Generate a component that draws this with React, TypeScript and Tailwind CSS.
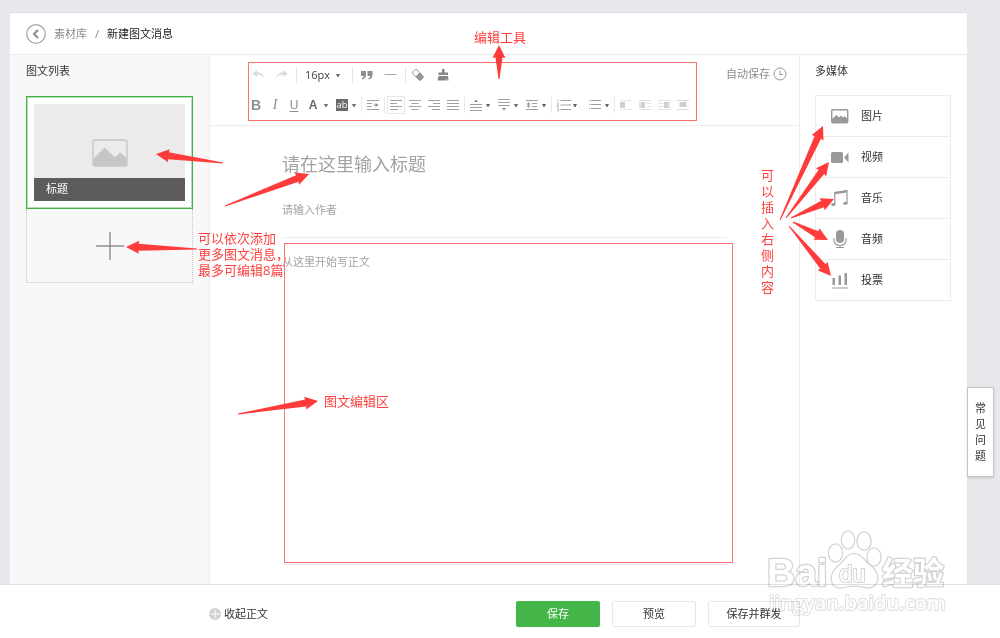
import { useState, type ReactNode } from "react";

type Point = [number, number];

const ARROWS: { from: Point; to: Point }[] = [
  { from: [223, 163], to: [156, 154] },
  { from: [225, 206], to: [309, 174] },
  { from: [197, 249], to: [126, 247] },
  { from: [499, 79], to: [499, 45] },
  { from: [238, 414], to: [318, 401] },
  { from: [780, 220], to: [823, 126] },
  { from: [786, 218], to: [829, 162] },
  { from: [791, 218], to: [834, 199] },
  { from: [793, 222], to: [828, 240] },
  { from: [789, 226], to: [831, 276] },
];

export default function App() {
  return (
    <div className="relative flex min-h-screen flex-col bg-[#e7e8eb] font-['Open_Sans','Noto_Sans_CJK_SC',sans-serif] text-[11px] leading-4 text-[#333]">
      <main className="flex flex-1 pt-3 pr-[33px] pl-[10px]">
        <div className="flex flex-1 flex-col border-t border-[#dedfe2] bg-white">
          <Header />
          <div className="flex flex-1">
            <ArticleList />
            <Editor />
            <MediaPanel />
          </div>
        </div>
      </main>
      <Footer />
      <button
        type="button"
        className="absolute top-[387px] right-[6px] flex h-[90px] w-[27px] items-center justify-center border border-[#c4c4c4] bg-white shadow-sm"
      >
        <span className="w-3 break-all">常见问题</span>
      </button>
      <Watermark />
      <Annotations />
    </div>
  );
}

function Header() {
  return (
    <header className="flex h-[42px] items-center border-b border-[#ececec] pl-4">
      <a href="#back" aria-label="返回">
        <svg className="size-5" viewBox="0 0 20 20" fill="none">
          <circle cx="10" cy="10" r="9.3" stroke="#a8a8a8" strokeWidth="1.3" />
          <path d="M12 6l-4 4 4 4" stroke="#8c8c8c" strokeWidth="2" />
        </svg>
      </a>
      <nav className="ml-2 flex gap-2">
        <a href="#library" className="text-[#8d8d8d]">素材库</a>
        <span className="text-[#8d8d8d]">/</span>
        <span className="text-[#222]">新建图文消息</span>
      </nav>
    </header>
  );
}

function ArticleList() {
  return (
    <aside className="w-[200px] border-r border-[#ececec] bg-[#f8f8f8] px-4 pt-2">
      <h2>图文列表</h2>
      <div className="mt-[17px] w-[167px] border border-[#3fb344] bg-white p-[7px] shadow-[inset_0_0_0_1px_#b5e0b6]">
        <div className="flex h-[97px] flex-col bg-[#ebebeb]">
          <div className="flex flex-1 items-end justify-center pb-[11px]">
            <svg className="h-7 w-9" viewBox="0 0 36 28">
              <rect x="1" y="1" width="34" height="26" rx="2" fill="none" stroke="#c6c6c6" strokeWidth="1.4" />
              <path d="M1 20L12.500 8.500L23 18.500L28 13.500L35 19V27H1z" fill="#c6c6c6" />
            </svg>
          </div>
          <p className="bg-[#5c5c5c] px-3 pt-[3px] pb-1 text-white">标题</p>
        </div>
      </div>
      <button
        type="button"
        aria-label="添加图文"
        className="flex h-[74px] w-[167px] items-center justify-center border border-t-0 border-dotted border-[#c4c4c4]"
      >
        <svg className="size-7" viewBox="0 0 28 28" stroke="#8e8e8e" strokeWidth="1.4">
          <path d="M0 14h28M14 0v28" />
        </svg>
      </button>
    </aside>
  );
}

function Editor() {
  const [title, setTitle] = useState("");
  const [author, setAuthor] = useState("");
  const [body, setBody] = useState("");

  return (
    <section className="flex flex-1 flex-col">
      <div className="flex items-start justify-between border-b border-[#ececec] pt-[7px] pr-[13px] pb-1 pl-[38px]">
        <Toolbar />
        <span className="mt-1 flex items-center gap-1 text-[#8d8d8d]">
          自动保存
          <svg className="size-3 overflow-visible" viewBox="0 0 12 12" fill="none" stroke="#999">
            <circle cx="6" cy="6" r="6" />
            <path d="M6 2.500V6.500H9" />
          </svg>
        </span>
      </div>
      <div className="flex flex-1 flex-col px-[72px] pt-6 pb-[19px]">
        <input
          aria-label="标题"
          placeholder="请在这里输入标题"
          value={title}
          onChange={(e) => setTitle(e.target.value)}
          className="h-7 text-[18px] outline-none placeholder:text-[#a3a3a3]"
        />
        <input
          aria-label="作者"
          placeholder="请输入作者"
          value={author}
          onChange={(e) => setAuthor(e.target.value)}
          className="mt-6 h-4 outline-none placeholder:text-[#a3a3a3]"
        />
        <textarea
          aria-label="正文"
          placeholder="从这里开始写正文"
          value={body}
          onChange={(e) => setBody(e.target.value)}
          className="mt-[19px] flex-1 resize-none border-y border-[#ececec] pt-4 outline-none placeholder:text-[#a3a3a3]"
        />
      </div>
    </section>
  );
}

function Toolbar() {
  return (
    <div className="flex h-[59px] w-[449px] flex-col gap-0.5 border border-[#ff7070] text-[#8f8f8f]">
      <div className="flex h-6 items-center pl-[3px]">
        <div className="flex gap-3">
          <Tool label="撤销">
            <path d="M5 1L0 4.500L5 8V5.800C8.500 5.500 10.500 6.500 12 9.500C11.800 6 9 3.500 5 3.300z" fill="#dcdcdc" />
          </Tool>
          <Tool label="重做">
            <path d="M7 1L12 4.500L7 8V5.800C3.500 5.500 1.500 6.500 0 9.500C0.200 6 3 3.500 7 3.300z" fill="#dcdcdc" />
          </Tool>
        </div>
        <Divider wide />
        <div className="relative">
          <select
            aria-label="字号"
            className="w-[39px] appearance-none text-[11px] text-[#444] outline-none"
            defaultValue="16px"
          >
            <option>14px</option>
            <option>16px</option>
            <option>18px</option>
          </select>
          <span className="pointer-events-none absolute inset-y-0 right-1 flex items-center">
            <Caret />
          </span>
        </div>
        <Divider wide />
        <div className="flex gap-3">
          <Tool label="引用">
            <path
              d="M0 2h5v4c0 2.500-1.500 4-4 4.500V9c1.200-.4 1.800-1 1.800-2H0zM6.500 2h5v4c0 2.500-1.500 4-4 4.500V9c1.200-.4 1.800-1 1.800-2H6.500z"
              fill="#8f8f8f"
            />
          </Tool>
          <Tool label="分隔线">
            <path d="M-.5 5.500h12" stroke="#a5a5a5" />
          </Tool>
        </div>
        <Divider wide />
        <div className="flex gap-3">
          <Tool label="清除格式">
            <path d="M-1 2.800L1 .8Q2 0 3 1L9 7Q9.600 8 9 9L7 11Q6 11.600 5 11L-1 5Q-1.800 4 -1 2.800z" stroke="#999" fill="none" />
            <path d="M5.500 3.500L9 7Q9.600 8 9 9L7 11Q6 11.600 5 11L1.700 7.500z" fill="#999" />
          </Tool>
          <Tool label="格式刷">
            <path d="M4 0h2.500v3.500h3.500v2.500H0.500V3.500H4zM0.500 7h9.500L10.500 11.500H8.500V9L7.500 11.500H-.5z" fill="#858585" />
          </Tool>
        </div>
      </div>
      <div className="flex h-[31px] items-center pl-px">
        <div className="flex items-center gap-[7px] font-['Liberation_Sans',sans-serif]">
          <button type="button" aria-label="加粗" className="w-3 text-[14px] font-bold">B</button>
          <button type="button" aria-label="斜体" className="w-3 font-['Liberation_Serif',serif] text-[14px] italic">I</button>
          <button type="button" aria-label="下划线" className="w-3 text-[12px] underline underline-offset-2">U</button>
          <button type="button" aria-label="字体颜色" className="w-3 text-[12px] font-bold text-[#666]">A</button>
        </div>
        <span className="w-[5px]" />
        <Caret />
        <span className="w-2" />
        <button type="button" aria-label="背景色" className="h-3 w-3 bg-[#6b6b6b] text-[9px] leading-[11px] text-white">ab</button>
        <span className="w-1" />
        <Caret />
        <Divider />
        <Tool label="首行缩进">
          <path d="M0 1.500h12M0 4.500h5M0 7.500h5M0 10.500h12M6.500 6h3" stroke="#a0a0a0" />
          <path d="M8.500 4L11.500 6L8.500 8z" fill="#888" />
        </Tool>
        <Divider />
        <div className="flex gap-[7px]">
          <Tool label="左对齐" active>
            <path d="M0 1.500h12M0 4.500h7M0 7.500h12M0 10.500h8" stroke="#a0a0a0" />
          </Tool>
          <Tool label="居中">
            <path d="M0 1.500h12M2.500 4.500h7M0 7.500h12M2.500 10.500h7" stroke="#a0a0a0" />
          </Tool>
          <Tool label="右对齐">
            <path d="M0 1.500h12M5 4.500h7M0 7.500h12M4 10.500h8" stroke="#a0a0a0" />
          </Tool>
          <Tool label="两端对齐">
            <path d="M0 1.500h12M0 4.500h12M0 7.500h12M0 10.500h12" stroke="#a0a0a0" />
          </Tool>
        </div>
        <Divider />
        <div className="flex gap-2">
          <MenuTool label="段前距">
            <path d="M0 5.500h12M0 8.500h12M0 11.500h12" stroke="#a0a0a0" />
            <path d="M4 3L6 .5L8 3z" fill="#888" />
          </MenuTool>
          <MenuTool label="段后距">
            <path d="M0 .5h12M0 3.500h12M0 6.500h12" stroke="#a0a0a0" />
            <path d="M4 9L6 11.500L8 9z" fill="#888" />
          </MenuTool>
          <MenuTool label="行间距">
            <path d="M0 1.500h12M6 4.500h5M6 7.500h5M0 10.500h12M2.500 4.500v3" stroke="#a0a0a0" />
            <path d="M.5 5.500L2.500 3L4.500 5.500zM.5 6.500L2.500 9L4.500 6.500z" fill="#999" />
          </MenuTool>
        </div>
        <Divider />
        <div className="flex gap-3">
          <MenuTool label="有序列表">
            <path d="M3.500 1.500H14M3.500 6H14M3.500 10.500H14" stroke="#a0a0a0" />
            <path d="M1 0v3M0 4.500h1.500v1.500H0v1.500h2M0 9h1.500v3H0M.5 10.500h1" stroke="#b0b0b0" strokeWidth=".7" fill="none" />
          </MenuTool>
          <MenuTool label="无序列表">
            <path d="M2 1.500H12M2 5.500H12M2 9.500H12M0 1.500h1.200M0 5.500h1.200M0 9.500h1.200" stroke="#a0a0a0" />
          </MenuTool>
        </div>
        <Divider />
        <div className="flex gap-[7px]">
          <Tool label="图片居左">
            <path d="M0 1.500h12M0 10.500h12" stroke="#e6e6e6" />
            <path d="M0 3h5v6H0z" fill="#cfcfcf" />
          </Tool>
          <Tool label="左环绕">
            <path d="M0 1.500h12M7.500 4.500H12M7.500 7.500H12M0 10.500h12M.5 3v6" stroke="#e2e2e2" />
            <path d="M1.500 3h4.500v6H1.500z" fill="#cfcfcf" />
          </Tool>
          <Tool label="右环绕">
            <path d="M0 1.500h12M0 4.500h5M0 7.500h5M0 10.500h12M11.500 3v6" stroke="#e2e2e2" />
            <path d="M6 3h4.500v6H6z" fill="#cfcfcf" />
          </Tool>
          <Tool label="图片居中">
            <path d="M0 1.500h12M0 10.500h12" stroke="#d8d8d8" />
            <path d="M2.500 3h7v5h-7z" fill="#cfcfcf" />
          </Tool>
        </div>
      </div>
    </div>
  );
}

type ToolProps = {
  label: string;
  active?: boolean;
  children: ReactNode;
};

function Tool({ label, active, children }: ToolProps) {
  return (
    <button
      type="button"
      aria-label={label}
      className={active ? "outline outline-offset-2 outline-[#e6e6e6]" : ""}
    >
      <svg className="size-3 overflow-visible" viewBox="0 0 12 12">
        {children}
      </svg>
    </button>
  );
}

function MenuTool(props: ToolProps) {
  return (
    <div className="flex items-center gap-1">
      <Tool {...props} />
      <Caret />
    </div>
  );
}

function Caret() {
  return (
    <svg className="h-1 w-1" viewBox="0 0 4 4">
      <path d="M0 1h4L2.500 4h-1z" fill="#666" />
    </svg>
  );
}

function Divider({ wide }: { wide?: boolean }) {
  return <span className={`h-4 w-px bg-[#e8e8e8] ${wide ? "mx-2" : "mx-[5px]"}`} />;
}

const MEDIA: { label: string; icon: ReactNode }[] = [
  {
    label: "图片",
    icon: (
      <>
        <rect x=".7" y="2.700" width="16" height="13" rx="1" fill="none" stroke="#999" strokeWidth="1.400" />
        <path d="M1 12L5.500 8L8 10.500L10 8.500L12 10.500L13.500 9L16.500 12V15.500H1z" fill="#999" />
      </>
    ),
  },
  {
    label: "视频",
    icon: (
      <>
        <rect x="0" y="4" width="12" height="11" rx="1.500" fill="#999" />
        <path d="M13 9.500L17.500 4.500V14.500z" fill="#999" />
      </>
    ),
  },
  {
    label: "音乐",
    icon: (
      <>
        <path d="M3.800 15.500V3.500L16 1.700V14" fill="none" stroke="#999" strokeWidth="1.200" />
        <path d="M3.800 3L16 1.200V3.500L3.800 5.200z" fill="#999" />
        <ellipse cx="2.200" cy="15.500" rx="2.200" ry="1.500" fill="#999" />
        <ellipse cx="14.300" cy="14.300" rx="2.200" ry="1.500" fill="#999" />
      </>
    ),
  },
  {
    label: "音频",
    icon: (
      <>
        <rect x="5" y="0" width="8" height="13" rx="4" fill="#999" />
        <path d="M3 8v2.500a6 5 0 0 0 12 0V8M9 15.500v2M5 17.500h8" fill="none" stroke="#999" strokeWidth="1.200" />
      </>
    ),
  },
  {
    label: "投票",
    icon: <path d="M1.500 7h2.500v7H1.500zM7.500 4.500h2.500v9.500h-2.500zM13.500 2h2.500v12h-2.500zM1 16.500h16v1H1z" fill="#999" />,
  },
];

function MediaPanel() {
  return (
    <aside className="w-[168px] border-l border-[#ececec] pt-2 pr-4 pl-[15px]">
      <h2>多媒体</h2>
      <ul className="mt-4 divide-y divide-[#ececec] border border-[#ececec]">
        {MEDIA.map((item) => (
          <li key={item.label}>
            <button type="button" className="flex h-10 w-full items-center gap-3 px-[15px]">
              <svg className="size-[18px]" viewBox="0 0 18 18">
                {item.icon}
              </svg>
              {item.label}
            </button>
          </li>
        ))}
      </ul>
    </aside>
  );
}

function Footer() {
  return (
    <footer className="flex h-[54px] items-center justify-between border-t border-[#dedfe2] bg-white pt-1 pr-[200px] pl-[209px]">
      <button type="button" className="flex items-center gap-[3px]">
        <svg className="size-3" viewBox="0 0 12 12">
          <circle cx="6" cy="6" r="6" fill="#d2d2d2" />
          <path d="M1.500 6h9M6 1.500v9" stroke="#fff" />
        </svg>
        收起正文
      </button>
      <div className="flex gap-3">
        <button type="button" className="h-[26px] w-[84px] rounded-[2px] bg-[#44b549] text-white">保存</button>
        <button type="button" className="h-[26px] w-[84px] rounded-[2px] border border-[#e7e7eb]">预览</button>
        <button type="button" className="h-[26px] w-[92px] rounded-[2px] border border-[#e7e7eb]">保存并群发</button>
      </div>
    </footer>
  );
}

function Watermark() {
  return (
    <svg
      className="pointer-events-none absolute top-[526px] left-[764px] h-[92px] w-[190px] mix-blend-multiply"
      viewBox="764 526 190 92"
      fill="#fff"
      stroke="#d4d4d4"
      strokeWidth="2.6"
      strokeLinejoin="round"
      paintOrder="stroke"
    >
      <g className="font-['Liberation_Sans',sans-serif] font-bold">
        <text x="767" y="586" fontSize="39">Bai</text>
        <ellipse cx="835.500" cy="553" rx="6.500" ry="8.500" />
        <ellipse cx="848" cy="540" rx="6" ry="8.500" />
        <ellipse cx="864" cy="541" rx="6.500" ry="8.500" />
        <ellipse cx="874" cy="557" rx="6.500" ry="8.500" />
        <path d="M854 554C861 554 864 561 869 565C874 569 878 573 877 580C875 589 866 588 861 586Q854 585 848 586C842 588 834 589 832 581C831 574 835 569 840 565C845 561 847 554 854 554z" />
        <text x="839" y="582" fontSize="24" strokeWidth="2" className="font-normal">du</text>
      </g>
      <text x="769" y="610" fontSize="20" stroke="#dedede" strokeWidth="2" className="font-['Open_Sans',sans-serif] font-semibold">
        jingyan.baidu.com
      </text>
      <text x="882" y="584" fontSize="31" className="font-['Noto_Sans_CJK_SC',sans-serif] font-bold">经验</text>
    </svg>
  );
}

function Annotations() {
  return (
    <div className="pointer-events-none absolute inset-0 text-[13px] text-[#ff4040]">
      <div className="absolute top-[243px] left-[284px] h-[320px] w-[449px] border border-[#ff7070]" />
      <svg className="absolute top-0 left-0 h-[638px] w-[1000px]" viewBox="0 0 1000 638" fill="#ff3b3b">
        {ARROWS.map(({ from, to }) => (
          <polygon key={to.join()} points={arrowPoints(from, to)} />
        ))}
      </svg>
      <p className="absolute top-[29px] left-[474px]">编辑工具</p>
      <p className="absolute top-[230px] left-[198px] whitespace-nowrap">
        可以依次添加
        <br />
        更多图文消息，
        <br />
        最多可编辑8篇
      </p>
      <p className="absolute top-[393px] left-[324px]">图文编辑区</p>
      <p className="absolute top-[167px] left-[761px] w-[14px] break-all">可以插入右侧内容</p>
    </div>
  );
}

// Tapered arrow: a point at `from`, widening into a barbed head at `to`.
function arrowPoints([x1, y1]: Point, [x2, y2]: Point) {
  const length = Math.hypot(x2 - x1, y2 - y1);
  const ux = (x2 - x1) / length;
  const uy = (y2 - y1) / length;
  const at = (back: number, side: number) => `${x2 - ux * back - uy * side},${y2 - uy * back + ux * side}`;

  return [at(0, 0), at(13, 6.5), at(12.5, 3.5), at(length, 0.5), at(length, -0.5), at(12.5, -3.5), at(13, -6.5)].join(" ");
}
